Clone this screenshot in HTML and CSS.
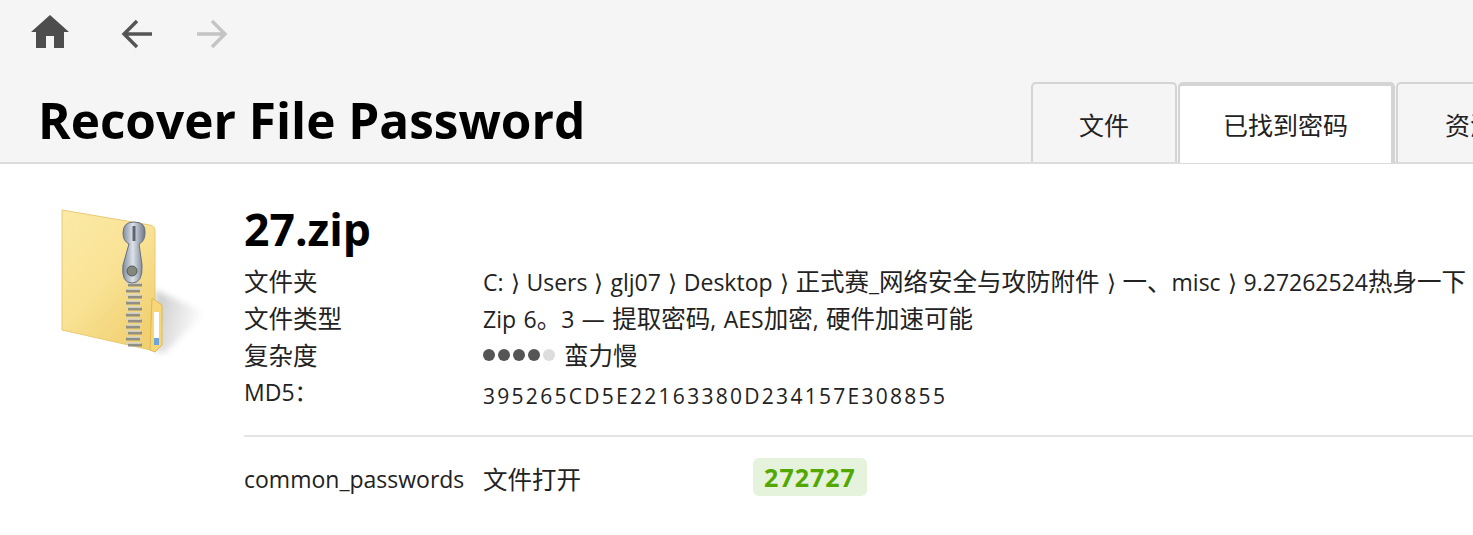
FILE: index.html
```html
<!DOCTYPE html>
<html lang="zh-CN">
  <head>
    <meta charset="UTF-8">
    <meta name="viewport" content="width=device-width, initial-scale=1.0">
    <title>Recover File Password</title>
    <link rel="stylesheet" href="styles.css">
  </head>
  <body>
    <header class="topbar">
      <nav class="nav">
        <svg class="nav-home" width="38" height="34" viewBox="0 0 38 34">
          <path d="M19 0 L38 17 L33 17 L33 33 L23 33 L23 21 L15 21 L15 33 L5 33 L5 17 L0 17 Z" fill="#4d4d4d"/>
        </svg>
        <svg class="nav-arrow" width="32" height="32" viewBox="0 0 32 32">
          <path d="M31 16 H4 M16 3 L3 16 L16 29" fill="none" stroke="#555" stroke-width="3.4"/>
        </svg>
        <svg class="nav-arrow" width="32" height="32" viewBox="0 0 32 32">
          <path d="M1 16 H28 M16 3 L29 16 L16 29" fill="none" stroke="#c4c4c4" stroke-width="3.4"/>
        </svg>
      </nav>
      <div class="title-row">
        <h1 class="page-title">Recover File Password</h1>
        <ul class="tabs">
          <li class="tab tab-files"><span class="cjk">文件</span></li>
          <li class="tab tab-found active"><span class="cjk">已找到密码</span></li>
          <li class="tab tab-res"><span class="cjk">资源</span></li>
        </ul>
      </div>
    </header>

    <main class="content">
      <div class="file-icon">
        <svg width="150" height="155" viewBox="0 0 150 155">
          <defs>
            <linearGradient id="folderFill" x1="0" y1="0" x2="0.7" y2="1">
              <stop offset="0" stop-color="#fbeaa6"/>
              <stop offset="0.55" stop-color="#f9e294"/>
              <stop offset="1" stop-color="#f1d071"/>
            </linearGradient>
            <linearGradient id="pullFill" x1="0" y1="0" x2="1" y2="0">
              <stop offset="0" stop-color="#7f8b9d"/>
              <stop offset="0.45" stop-color="#dde2ea"/>
              <stop offset="1" stop-color="#6c7686"/>
            </linearGradient>
            <linearGradient id="shadowFill" x1="0" y1="0" x2="1" y2="0.3">
              <stop offset="0" stop-color="#c8c8c8"/>
              <stop offset="1" stop-color="#fff"/>
            </linearGradient>
            <filter id="soft"><feGaussianBlur stdDeviation="3"/></filter>
            <filter id="softer"><feGaussianBlur stdDeviation="0.4"/></filter>
          </defs>
          <path d="M97 85 L148 108 L106 148 L97 146 Z" fill="url(#shadowFill)" filter="url(#soft)"/>
          <g filter="url(#softer)">
            <path d="M4 5 L92 20 Q97 21 97 26 L97 146 L4 125 Z" fill="url(#folderFill)" stroke="#e8ca72" stroke-width="1"/>
            <path d="M94 93 L104 100 L104 140 L97 147 L92 145 Z" fill="#f6d676" stroke="#dcb955" stroke-width="1"/>
            <rect x="96" y="107" width="5" height="32" fill="#fff"/>
            <rect x="96" y="133" width="5" height="7" fill="#6ea5dc"/>
            <path d="M70 80 H84 M68 86 H82 M70 92 H84 M68 98 H82 M70 104 H84 M68 110 H82 M70 116 H84 M68 122 H82 M70 128 H84 M68 134 H82 M70 140 H84" fill="none" stroke="#8f8f86" stroke-width="3"/>
            <path d="M68 78 H83 M69 84 H84 M68 90 H83 M69 96 H84 M68 102 H83 M69 108 H84 M68 114 H83 M69 120 H84 M68 126 H83 M69 132 H84 M68 138 H83" fill="none" stroke="#d6d6cc" stroke-width="1.5"/>
            <path d="M65 28 Q65 17 76 17 Q88 17 87 28 Q87 36 81 39 L84 60 Q85 78 74 78 Q63 78 65 60 L71 39 Q65 36 65 28 Z" fill="url(#pullFill)" stroke="#666f7d" stroke-width="1"/>
            <path d="M76 21 V36" stroke="#5e6672" stroke-width="3"/>
            <circle cx="74" cy="66" r="5" fill="#84887a" stroke="#555b63" stroke-width="1"/>
          </g>
        </svg>
      </div>
      <div class="details">
        <h2 class="file-name">27.zip</h2>
        <dl class="props">
          <dt class="cjk">文件夹</dt>
          <dd class="path">C: ⟩ Users ⟩ glj07 ⟩ Desktop ⟩ <span class="cjk">正式赛</span>_<span class="cjk">网络安全与攻防附件</span> ⟩ <span class="cjk">一、</span>misc ⟩ 9.27262524<span class="cjk">热身一下</span></dd>
          <dt class="cjk">文件类型</dt>
          <dd class="kind">Zip 6<span class="cjk">。</span>3 — <span class="cjk">提取密码</span>, AES<span class="cjk">加密</span>, <span class="cjk">硬件加速可能</span></dd>
          <dt class="cjk">复杂度</dt>
          <dd class="complexity">
            <span class="dots"><i></i><i></i><i></i><i></i><i class="off"></i></span>
            <span class="cjk">蛮力慢</span>
          </dd>
          <dt class="md5-label">MD5：</dt>
          <dd class="hash">395265CD5E22163380D234157E308855</dd>
        </dl>
        <hr class="divider">
        <div class="result">
          <span class="result-source">common_passwords</span>
          <span class="result-type cjk">文件打开</span>
          <span class="password">272727</span>
        </div>
      </div>
    </main>
  </body>
</html>
```

FILE: styles.css
```css
* {
  box-sizing: border-box;
  margin: 0;
  padding: 0;
}

html, body {
  height: 100%;
  overflow: hidden;
}

body {
  background: #fff;
  color: #222;
  font-family: "Open Sans", "Noto Sans CJK SC", sans-serif;
  font-size: 23px;
  width: 1473px;
}

/* latin text runs narrower than the cjk glyphs in this UI */
.cjk {
  font-family: "Noto Sans CJK SC", sans-serif;
  font-size: 24.5px;
}

.topbar {
  background: #f5f5f5;
  border-bottom: 2px solid #dcdcdc;
  height: 164px;
}

.nav {
  align-items: center;
  display: flex;
  height: 83px;
  padding: 0 0 15px 31px;
}

.nav-home {
  margin-bottom: 5px;
  margin-right: 52px;
}

.nav-arrow {
  margin-right: 43px;
}

.title-row {
  align-items: flex-end;
  display: flex;
  height: 79px;
  justify-content: space-between;
  white-space: nowrap;
}

.page-title {
  color: #000;
  font-size: 49.5px;
  line-height: 74px;
  margin-bottom: 5px;
  margin-left: 38px;
}

.tabs {
  display: flex;
  height: 81px;
  list-style: none;
  margin-bottom: -1px;
  width: 442px;
}

.tab {
  background: #f5f5f5;
  border: 2px solid #d4d4d4;
  border-bottom: 0;
  border-radius: 5px 5px 0 0;
  flex: none;
  height: 80px;
  line-height: 80px;
  text-align: center;
}

.tab .cjk {
  font-size: 25px;
}

.tab-files {
  margin-right: 1px;
  width: 146px;
}

.tab-found {
  width: 217px;
}

.tab-res {
  margin-left: 1px;
  padding-left: 47px;
  text-align: left;
  width: 120px;
}

.tab.active {
  background: #fff;
  border-top-width: 4px;
  border-right-width: 4px;
  height: 81px;
  line-height: 76px;
}

.content {
  display: flex;
  padding-top: 41px;
}

.file-icon {
  flex: none;
  margin-left: 58px;
  width: 186px;
}

.details {
  flex: none;
  width: 1300px;
}

.file-name {
  color: #000;
  font-size: 44.5px;
  line-height: 50px;
  margin-bottom: 8px;
  margin-top: -1px;
}

.props {
  display: grid;
  grid-template-columns: 239px 1fr;
  grid-auto-rows: 37px;
  line-height: 37px;
  white-space: nowrap;
}

.path {
  word-spacing: 1px;
}

.kind {
  word-spacing: 1.5px;
}

.complexity {
  align-items: center;
  display: flex;
  gap: 9px;
}

.dots {
  display: flex;
  gap: 3px;
}

.dots i {
  background: #555;
  border-radius: 50%;
  height: 12px;
  width: 12px;
}

.dots i.off {
  background: #ddd;
}

.md5-label {
  padding-top: 1px;
}

.hash {
  font-size: 21px;
  letter-spacing: 2.28px;
  padding-top: 5px;
}

.divider {
  border: 0;
  border-top: 2px solid #e4e4e4;
  margin-top: 25px;
  width: 1229px;
}

.result {
  align-items: center;
  display: flex;
  margin-top: 21px;
}

.result-source {
  padding-top: 4px;
  width: 239px;
}

.result-type {
  padding-top: 2px;
  width: 270px;
}

.password {
  background: #e5f2dc;
  border-radius: 6px;
  color: #53a800;
  font-size: 25px;
  font-weight: 700;
  height: 38px;
  letter-spacing: 1px;
  line-height: 38px;
  text-align: center;
  width: 114px;
}
```
